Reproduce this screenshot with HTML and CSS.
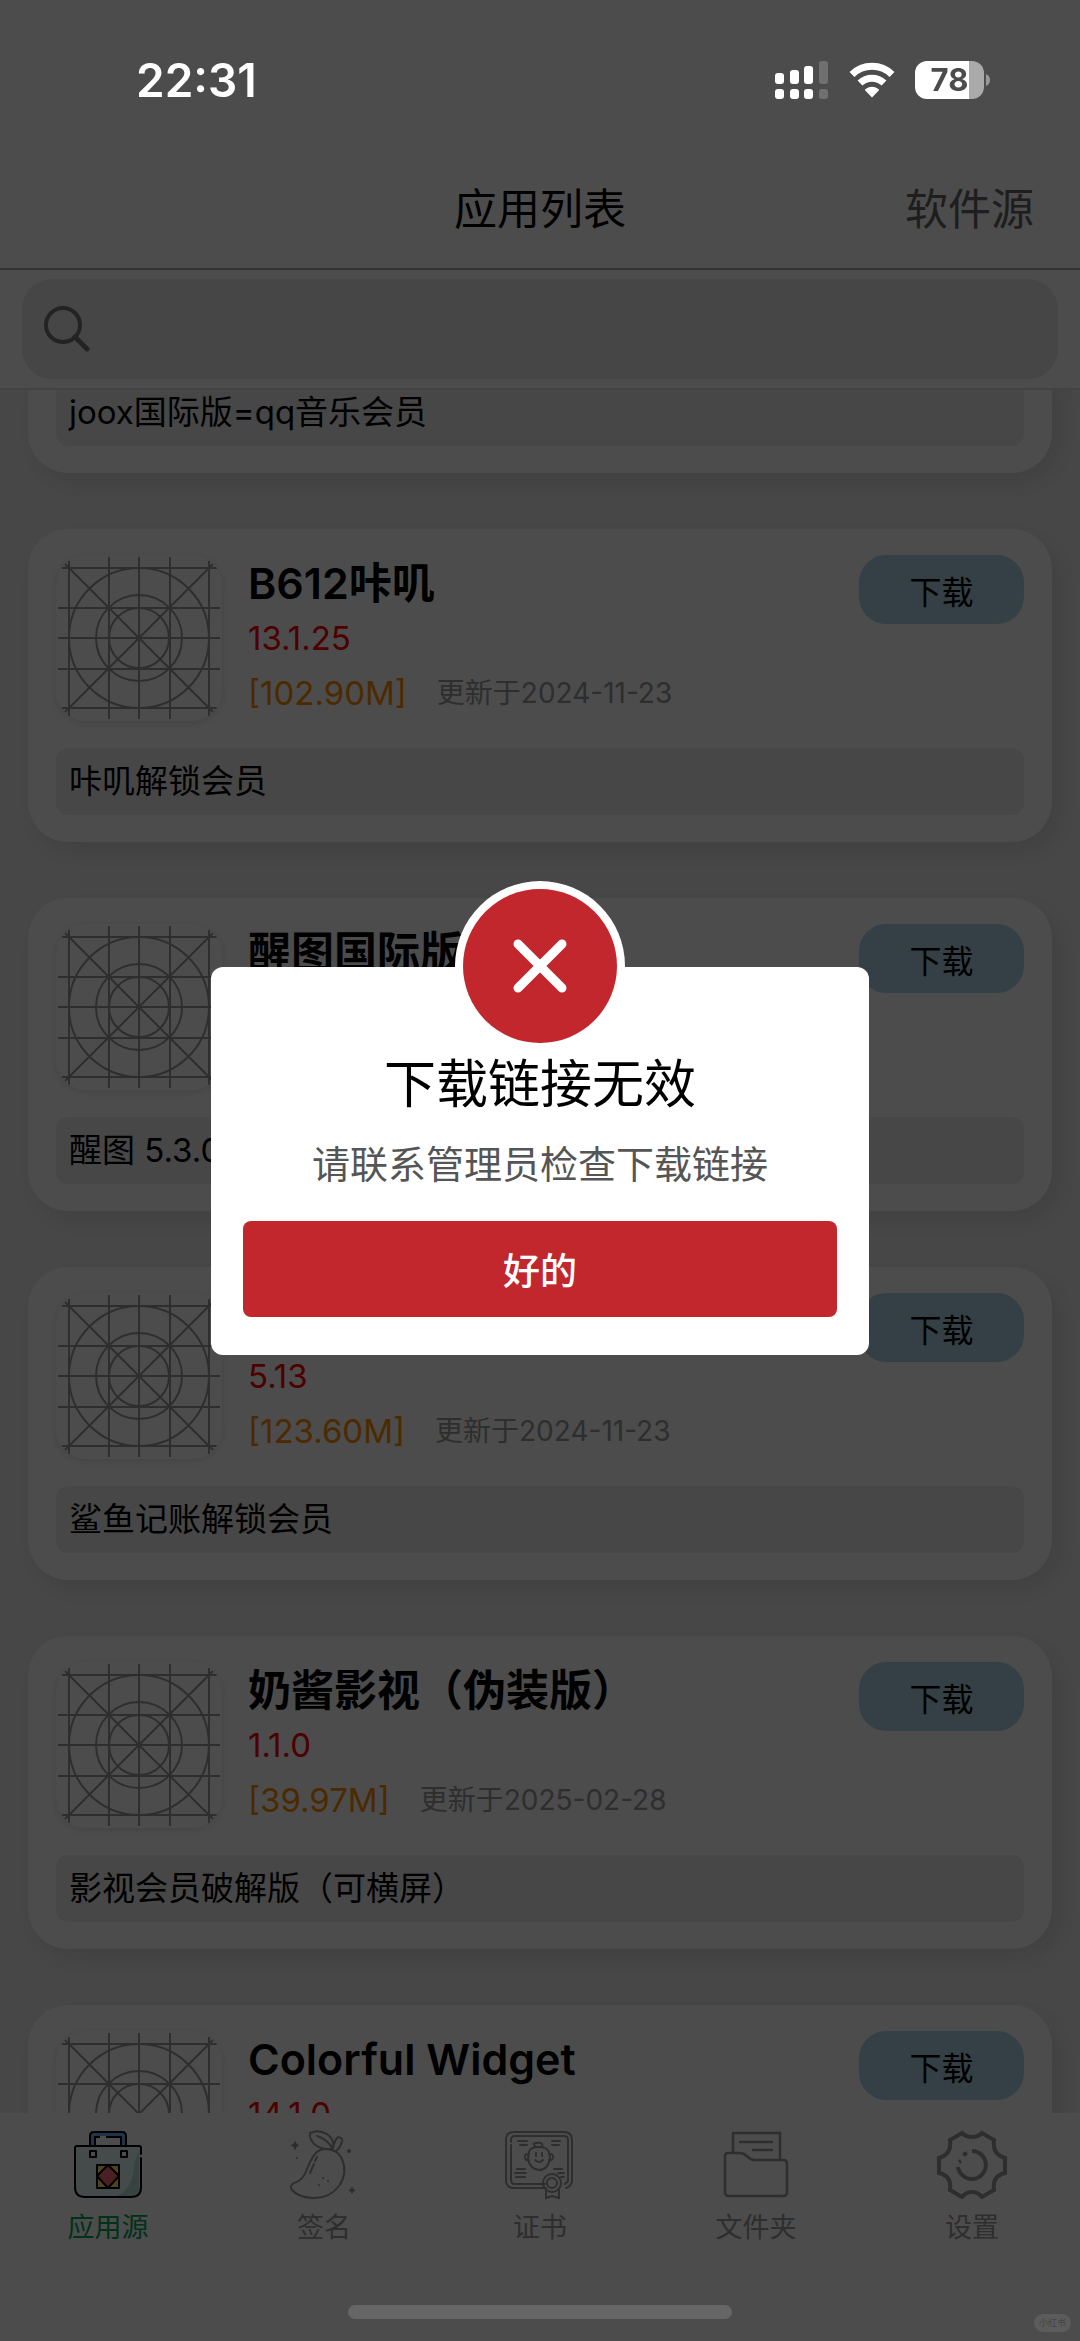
FILE: index.html
```html
<!DOCTYPE html>
<html lang="zh-CN">
<head>
<meta charset="utf-8">
<meta name="viewport" content="width=device-width, initial-scale=1">
<title>应用列表</title>
<link rel="stylesheet" href="styles.css">
</head>
<body>
<svg class="defs" aria-hidden="true">
  <symbol id="grid" viewBox="0 0 166 166">
    <g fill="none" stroke="#999" stroke-width="2">
      <path d="M13 6V161M53 2V164M83 2V164M114 2V164M153 6V161M6 13H161M2 53H164M2 83H164M2 114H164M6 153H161M9 9L157 157M157 9L9 157"/>
      <circle cx="83" cy="83" r="30"/><circle cx="83" cy="83" r="43"/><circle cx="83" cy="83" r="70"/>
    </g>
  </symbol>
</svg>

<div class="app">
  <header class="status">
    <span class="clock">22:31</span>
    <span class="indicators">
      <svg width="54" height="38" viewBox="0 0 54 38" aria-label="信号">
        <g fill="#fff"><rect y="12" width="9" height="11" rx="3"/><rect x="15" y="9" width="9" height="14" rx="3"/><rect x="29" y="5" width="9" height="18" rx="3"/><rect y="28" width="9" height="10" rx="3"/><rect x="15" y="28" width="9" height="10" rx="3"/><rect x="29" y="28" width="9" height="10" rx="3"/></g>
        <g fill="#707070"><rect x="44" width="9" height="23" rx="3"/><rect x="44" y="28" width="9" height="10" rx="3"/></g>
      </svg>
      <svg width="46" height="38" viewBox="0 0 46 38" aria-label="无线网络">
        <g fill="none" stroke="#fff" stroke-width="7"><path d="M3 13.500A28.500 28.500 0 0 1 43 13.500"/><path d="M11 22A17.500 17.500 0 0 1 35 22"/></g>
        <path d="M23 36.500L16.200 29.600Q15.500 28.800 16.600 28.100Q23 23.600 29.400 28.100Q30.500 28.800 29.800 29.600Z" fill="#fff"/>
      </svg>
      <span class="battery">
        <span class="battery-level">78</span>
        <svg width="4" height="12" viewBox="0 0 4 12" aria-hidden="true"><path d="M0 0Q4 2 4 6Q4 10 0 12Z" fill="#999"/></svg>
      </span>
    </span>
  </header>

  <nav class="titlebar">
    <h1 class="title">应用列表</h1>
    <a class="source" href="#source">软件源</a>
  </nav>

  <div class="searchbar">
    <label class="search">
      <svg width="46" height="46" viewBox="0 0 46 46" fill="none" stroke="#777" aria-hidden="true"><circle cx="19" cy="19" r="17" stroke-width="4"/><path d="M31 31L43 43" stroke-width="5" stroke-linecap="round"/></svg>
      <input class="search-input" type="search" aria-label="搜索">
    </label>
  </div>

  <main class="list">
    <article class="card"><p class="desc">joox国际版=qq音乐会员</p></article>

    <article class="card">
      <div class="head">
        <svg class="icon"><use href="#grid"/></svg>
        <div class="info">
          <h2 class="name">B612咔叽</h2>
          <p class="version">13.1.25</p>
          <p class="meta"><span class="size">[102.90M]</span><span class="date">更新于2024-11-23</span></p>
        </div>
        <button class="download" type="button">下载</button>
      </div>
      <p class="desc">咔叽解锁会员</p>
    </article>

    <article class="card">
      <div class="head">
        <svg class="icon"><use href="#grid"/></svg>
        <div class="info">
          <h2 class="name">醒图国际版</h2>
        </div>
        <button class="download" type="button">下载</button>
      </div>
      <p class="desc">醒图 5.3.0</p>
    </article>

    <article class="card">
      <div class="head">
        <svg class="icon"><use href="#grid"/></svg>
        <div class="info">
          <h2 class="name">鲨鱼记账</h2>
          <p class="version">5.13</p>
          <p class="meta"><span class="size">[123.60M]</span><span class="date">更新于2024-11-23</span></p>
        </div>
        <button class="download" type="button">下载</button>
      </div>
      <p class="desc">鲨鱼记账解锁会员</p>
    </article>

    <article class="card">
      <div class="head">
        <svg class="icon"><use href="#grid"/></svg>
        <div class="info">
          <h2 class="name">奶酱影视（伪装版）</h2>
          <p class="version">1.1.0</p>
          <p class="meta"><span class="size">[39.97M]</span><span class="date">更新于2025-02-28</span></p>
        </div>
        <button class="download" type="button">下载</button>
      </div>
      <p class="desc">影视会员破解版（可横屏）</p>
    </article>

    <article class="card">
      <div class="head">
        <svg class="icon"><use href="#grid"/></svg>
        <div class="info">
          <h2 class="name">Colorful Widget</h2>
          <p class="version">14.1.0</p>
        </div>
        <button class="download" type="button">下载</button>
      </div>
    </article>
  </main>

  <footer class="tabs">
    <a class="tab active" href="#apps" aria-current="page">
      <svg width="72" height="72" viewBox="0 0 72 72" aria-hidden="true">
        <g stroke="#000" stroke-width="2" stroke-linejoin="round">
          <path d="M18 19V6Q18 2 22 2H50Q54 2 54 6V19H49V7H23V19Z" fill="#74b0ee"/>
          <path d="M5 16H67Q69 16 69 18V58Q69 67 60 67H13Q3 67 3 57V18Q3 16 5 16Z" fill="#e8f7fc" stroke="none"/>
          <path d="M67 20V57Q67 66 58 66H45Q62 58 62 34Z" fill="#b8e0da" stroke="none"/>
          <path d="M69 28V57Q69 67 59 67H13Q3 67 3 57V18Q3 16 5 16H67Q69 16 69 18V24" fill="none" stroke-linecap="round"/>
          <path d="M18 21H24V27H18ZM49 21H55V27H49Z" fill="#fff"/>
          <path d="M25 35H47V58H25Z" fill="#ffe85c"/><path d="M36 35L47 46L36 58L25 46Z" fill="#ff6876"/>
        </g>
        <path d="M28 7H34" stroke="#fff" stroke-width="2"/>
      </svg>
      <span>应用源</span>
    </a>
    <a class="tab" href="#sign">
      <svg width="72" height="72" viewBox="0 0 72 72" aria-hidden="true" fill="none" stroke="currentColor" stroke-width="2" stroke-linejoin="round" stroke-linecap="round">
        <path d="M32 20Q25 23 19 39Q15 51 6 53Q1 56 4 60Q10 67 24 68Q41 69 51 56Q60 43 54 29Q50 21 43 20Q38 18 32 20Z"/>
        <path d="M45 19Q26 20 22 7L22 3Q30-1 39 4Q47 10 45 19Q39 9 29 6M45 19Q46 11 50 7Q55 8 54 11Q53 17 48 21"/>
        <path d="M29 27L27 31M26 34L22 43"/>
        <g fill="currentColor" stroke="none"><path d="M7 10Q8 15 12 15Q8 16 7 21Q6 16 2 15Q6 15 7 10ZM64 56Q65 60 68 60Q65 61 64 64Q63 61 60 60Q63 60 64 56Z"/><circle cx="61" cy="21" r="2"/><circle cx="9" cy="28" r="1"/><circle cx="35" cy="48" r="1"/><circle cx="40" cy="51" r="1"/><circle cx="31" cy="55" r="1"/></g>
      </svg>
      <span>签名</span>
    </a>
    <a class="tab" href="#cert">
      <svg width="72" height="72" viewBox="0 0 72 72" aria-hidden="true" fill="none" stroke="currentColor" stroke-width="2" stroke-linecap="round">
        <path d="M42 58H10Q2 58 2 50V10Q2 2 10 2H60Q68 2 68 10V50Q68 56 62 58"/>
        <path d="M7 15V50Q7 54 11 54H41M7 12V10Q7 6 11 6H60Q64 6 64 10V51L61 54"/>
        <path d="M14 11H23M16 15H23M48 11H56M48 15H55M13 39H21M11 43H22M12 47H21M50 39H58M54 43H60M57 47H60"/>
        <path d="M25 22Q26 17 35 17Q43 17 45 22L46 28Q44 40 35 40Q26 39 24 29Z M24 24Q20 24 21 28Q22 31 25 30M46 24Q50 24 49 28Q48 31 45 30M32 17Q27 13 32 13Q40 12 38 17M32 23V26M38 23V26M31 30Q35 34 39 30"/>
        <circle cx="48" cy="53" r="9"/><circle cx="48" cy="53" r="5"/><path d="M42 60V68L48 66L55 68V60"/>
      </svg>
      <span>证书</span>
    </a>
    <a class="tab" href="#files">
      <svg width="72" height="72" viewBox="0 0 72 72" aria-hidden="true" fill="none" stroke="currentColor" stroke-width="2.500" stroke-linejoin="round" stroke-linecap="round">
        <path d="M13 22V3H60V28M20 12H52M33 20H52"/>
        <path d="M8 23H20Q24 23 28 27Q31 30 35 30H63Q67 30 67 34V62Q67 66 63 66H9Q5 66 5 62V26Q5 23 8 23Z"/>
      </svg>
      <span>文件夹</span>
    </a>
    <a class="tab" href="#settings">
      <svg width="72" height="72" viewBox="0 0 72 72" aria-hidden="true" fill="none" stroke="currentColor" stroke-width="4">
        <path d="M26 3Q30 7 36 7Q42 7 46 3L58 10Q56 24 69 28V43Q56 46 58 60L46 67Q42 62 36 62Q30 62 26 67L14 60Q16 46 3 43V28Q16 24 14 10Z"/>
        <path d="M36 21A14 14 0 1 1 22 37M23 32L25 31M27 25L31 23" />
      </svg>
      <span>设置</span>
    </a>
  </footer>
</div>

<div class="overlay">
  <section class="dialog" role="alertdialog" aria-labelledby="dialog-title" aria-describedby="dialog-text">
    <svg class="badge" viewBox="0 0 170 170" aria-hidden="true"><circle cx="85" cy="85" r="85" fill="#fff"/><circle cx="85" cy="85" r="77" fill="#c1272d"/><path d="M63 63L107 107M107 63L63 107" stroke="#fff" stroke-width="9" stroke-linecap="round"/></svg>
    <h2 class="dialog-title" id="dialog-title">下载链接无效</h2>
    <p class="dialog-text" id="dialog-text">请联系管理员检查下载链接</p>
    <button class="confirm" type="button">好的</button>
  </section>
  <span class="home"></span>
  <span class="mark">小红书</span>
</div>
</body>
</html>
```
FILE: styles.css
```css
* { box-sizing: border-box; }

body {
  margin: 0;
  background: #fff;
  color: #000;
  font-family: Inter, "Noto Sans CJK SC", sans-serif;
}

h1, h2, p { margin: 0; font-weight: 400; }
a { color: inherit; text-decoration: none; }
button, input { font: inherit; color: inherit; border: 0; padding: 0; }
.defs { display: none; }

.app {
  display: flex;
  flex-direction: column;
  height: 100vh;
  overflow: hidden;
}

/* status bar */
.status {
  position: relative;
  z-index: 2;
  display: flex;
  flex: none;
  justify-content: space-between;
  align-items: center;
  height: 160px;
  padding: 0 90px 0 136px;
  color: #fff;
}
.clock { font-size: 46px; font-weight: 600; }
.indicators { display: flex; align-items: center; gap: 20px; }
.battery { display: flex; align-items: center; gap: 2px; }
.battery-level {
  width: 69px;
  height: 38px;
  border-radius: 12px;
  background: linear-gradient(90deg, #fff 54px, #aaa 54px);
  color: #4c4c4c;
  font-size: 31px;
  font-weight: 700;
  line-height: 38px;
  text-align: center;
}

/* navigation */
.titlebar {
  display: grid;
  grid-template-columns: 1fr auto 1fr;
  flex: none;
  align-items: center;
  height: 110px;
  padding: 0 46px 16px;
  border-bottom: 2px solid #aaa;
  font-size: 43px;
}
.title { grid-column: 2; font-size: 43px; }
.source { justify-self: end; color: #666; }

.searchbar {
  flex: none;
  padding: 9px 22px;
  border-bottom: 2px solid #e0e0e0;
}
.search {
  display: flex;
  align-items: center;
  gap: 20px;
  height: 100px;
  padding: 0 22px;
  border-radius: 30px;
  background: #ececec;
}
.search-input { flex: 1; background: none; font-size: 33px; outline: 0; }

/* app list, scrolled part of the way into its first card */
.list {
  flex: 1;
  min-height: 0;
  overflow: hidden;
  padding: 0 28px;
  background: #efefef;
}
.card {
  display: flex;
  flex-direction: column;
  gap: 27px;
  margin-bottom: 56px;
  padding: 26px 28px 27px;
  border-radius: 40px;
  background: #fff;
  box-shadow: 8px 10px 24px rgba(0, 0, 0, .1);
}
.card:first-child { margin-top: -37px; }
.head { display: flex; align-items: flex-start; gap: 26px; }
.icon {
  flex: none;
  width: 166px;
  height: 166px;
  border-radius: 30px;
  box-shadow: 0 2px 8px rgba(0, 0, 0, .12);
}
.info { flex: 1; padding-top: 1px; line-height: 55px; white-space: nowrap; }
.name { font-size: 43px; font-weight: 600; }
.version { color: #f00; font-size: 33px; }
.meta { display: flex; gap: 30px; }
.size { color: #ff8c00; font-size: 33px; }
.date { color: #999; font-size: 28px; }
.download {
  width: 165px;
  height: 69px;
  border-radius: 27px;
  background: #add8e6;
  font-size: 32px;
}
.desc {
  padding: 0 13px;
  border-radius: 12px;
  background: #efefef;
  font-size: 33px;
  line-height: 67px;
}

/* tab bar */
.tabs {
  display: grid;
  grid-template-columns: repeat(5, 1fr);
  flex: none;
  height: 228px;
  padding-top: 17px;
  background: #fff;
  color: #999;
}
.tab {
  display: flex;
  flex-direction: column;
  align-items: center;
  gap: 5px;
  font-size: 27px;
  line-height: 42px;
}
.tab.active { color: #00a65a; }

/* modal */
.overlay {
  position: fixed;
  inset: 0;
  z-index: 1;
  display: flex;
  align-items: center;
  justify-content: center;
  background: rgba(0, 0, 0, .7);
}
.dialog {
  position: relative;
  display: flex;
  flex-direction: column;
  align-items: center;
  width: 61%;
  margin-top: -20px;
  padding: 82px 32px 38px;
  border-radius: 12px;
  background: #fff;
}
.badge {
  position: absolute;
  top: -86px;
  width: 170px;
  height: 170px;
}
.dialog-title { font-size: 52px; line-height: 72px; }
.dialog-text { margin: 16px 0 30px; color: #555; font-size: 38px; line-height: 54px; }
.confirm {
  width: 100%;
  height: 96px;
  border-radius: 8px;
  background: #c1272d;
  color: #fff;
  font-size: 37px;
  font-weight: 500;
}
.home {
  position: absolute;
  bottom: 22px;
  left: 50%;
  width: 384px;
  height: 14px;
  margin-left: -192px;
  border-radius: 7px;
  background: #666;
}
.mark {
  position: absolute;
  right: 9px;
  bottom: 9px;
  padding: 0 5px;
  border-radius: 9px;
  background: #5c5c5c;
  color: #444;
  font-size: 9px;
  line-height: 18px;
}
```
